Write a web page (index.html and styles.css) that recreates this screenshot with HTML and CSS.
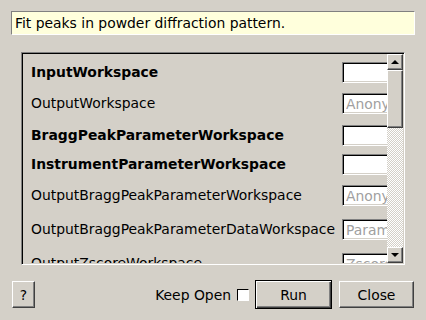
FILE: index.html
```html
<!DOCTYPE html>
<html lang="en">
<head>
    <meta charset="UTF-8">
    <title>FitPowderDiffPeaks input dialog</title>
    <link rel="stylesheet" href="styles.css">
</head>
<body>
    <div class="dialog">
        <div class="summary">Fit peaks in powder diffraction pattern.</div>

        <!-- Properties, inside a scroll area -->
        <div class="props">
            <div class="props-view">
                <div class="props-grid">
                    <label class="prop-name required">InputWorkspace</label>
                    <input class="prop-input" type="text">

                    <label class="prop-name">OutputWorkspace</label>
                    <input class="prop-input" type="text" placeholder="Anonymous">

                    <label class="prop-name required">BraggPeakParameterWorkspace</label>
                    <input class="prop-input" type="text">

                    <label class="prop-name required">InstrumentParameterWorkspace</label>
                    <input class="prop-input" type="text">

                    <label class="prop-name">OutputBraggPeakParameterWorkspace</label>
                    <input class="prop-input" type="text" placeholder="Anonymous">

                    <label class="prop-name">OutputBraggPeakParameterDataWorkspace</label>
                    <input class="prop-input" type="text" placeholder="ParameterData">

                    <label class="prop-name">OutputZscoreWorkspace</label>
                    <input class="prop-input" type="text" placeholder="ZscoreTable">
                </div>
            </div>
            <div class="vscroll">
                <div class="arrow up"></div>
                <div class="thumb"></div>
                <div class="trough"></div>
                <div class="arrow down"></div>
            </div>
        </div>

        <div class="buttons">
            <button class="btn help">?</button>
            <span class="spacer"></span>
            <label class="keep-open">Keep Open <span class="check"></span></label>
            <button class="btn default">Run</button>
            <button class="btn close">Close</button>
        </div>
    </div>
</body>
</html>
```

FILE: styles.css
```css
body {
    margin: 0;
    background-color: #d4d0c8;
    font-family: 'DejaVu Sans', sans-serif;
    font-size: 13.9px;
    color: #000;
}

.dialog {
    display: flex;
    flex-direction: column;
    padding: 11px;
}

.summary {
    height: 24px;
    box-sizing: border-box;
    line-height: 22px;
    padding: 0 3px;
    background-color: #ffffdc;
    border: 1px solid;
    border-color: #808080 #fff #fff #808080;
    white-space: nowrap;
}

/* scroll area with sunken frame */
.props {
    display: flex;
    height: 213px;
    margin: 17px 10px 0;
    border: 1px solid;
    border-color: #808080 #fff #fff #808080;
    box-shadow: inset 1px 1px 0 #000, inset -1px -1px 0 #d4d0c8;
    padding: 1px;
    box-sizing: border-box;
}

.props-view {
    flex: 1;
    overflow: hidden;
}

.props-grid {
    display: grid;
    grid-template-columns: 311px 80px;
    grid-template-rows: 31px 32px 29px 31px 34px 34px 21px;
    align-items: start;
    padding: 8px 0 0 8px;
}

.prop-name {
    line-height: 21px;
    white-space: nowrap;
}

.prop-name.required {
    font-weight: bold;
}

.prop-input {
    width: 80px;
    height: 21px;
    box-sizing: border-box;
    margin: 0;
    padding: 0 3px;
    font: inherit;
    background-color: #fff;
    border: 1px solid;
    border-color: #808080 #fff #fff #808080;
    box-shadow: inset 1px 1px 0 #000, inset -1px -1px 0 #d4d0c8;
    outline: none;
}

.prop-input::placeholder {
    color: #a0a0a0;
}

.vscroll {
    width: 16px;
    display: flex;
    flex-direction: column;
}

.arrow, .thumb {
    box-sizing: border-box;
    background-color: #d4d0c8;
    border: 1px solid;
    border-color: #fff #404040 #404040 #fff;
    box-shadow: inset -1px -1px 0 #808080;
}

.arrow {
    height: 16px;
    display: flex;
    align-items: center;
    justify-content: center;
}

.arrow::after {
    content: "";
    border-left: 4px solid transparent;
    border-right: 4px solid transparent;
}

.arrow.up::after {
    border-bottom: 4px solid #000;
}

.arrow.down::after {
    border-top: 4px solid #000;
}

.thumb {
    height: 58px;
}

.trough {
    flex: 1;
    background: repeating-conic-gradient(#fff 0 25%, #d4d0c8 0 50%) 0 0 / 2px 2px;
}

/* bottom row */
.buttons {
    display: flex;
    align-items: center;
    margin-top: 15px;
    padding: 0 1px;
}

.spacer {
    flex: 1;
}

.btn {
    height: 27px;
    box-sizing: border-box;
    margin: 0;
    padding: 0;
    font: inherit;
    color: #000;
    background-color: #d4d0c8;
    border: 1px solid;
    border-color: #fff #404040 #404040 #fff;
    box-shadow: inset -1px -1px 0 #808080;
}

.help {
    width: 23px;
}

.default {
    width: 77px;
    height: 29px;
    margin-left: 6px;
    border-color: #000;
    box-shadow: inset 1px 1px 0 #fff, inset -1px -1px 0 #404040, inset -2px -2px 0 #808080;
}

.close {
    width: 75px;
    margin-left: 7px;
}

.keep-open {
    display: flex;
    align-items: center;
    gap: 6px;
    white-space: nowrap;
}

.check {
    width: 12px;
    height: 12px;
    box-sizing: border-box;
    background-color: #fff;
    border: 1px solid;
    border-color: #000 #fff #fff #000;
}
```
